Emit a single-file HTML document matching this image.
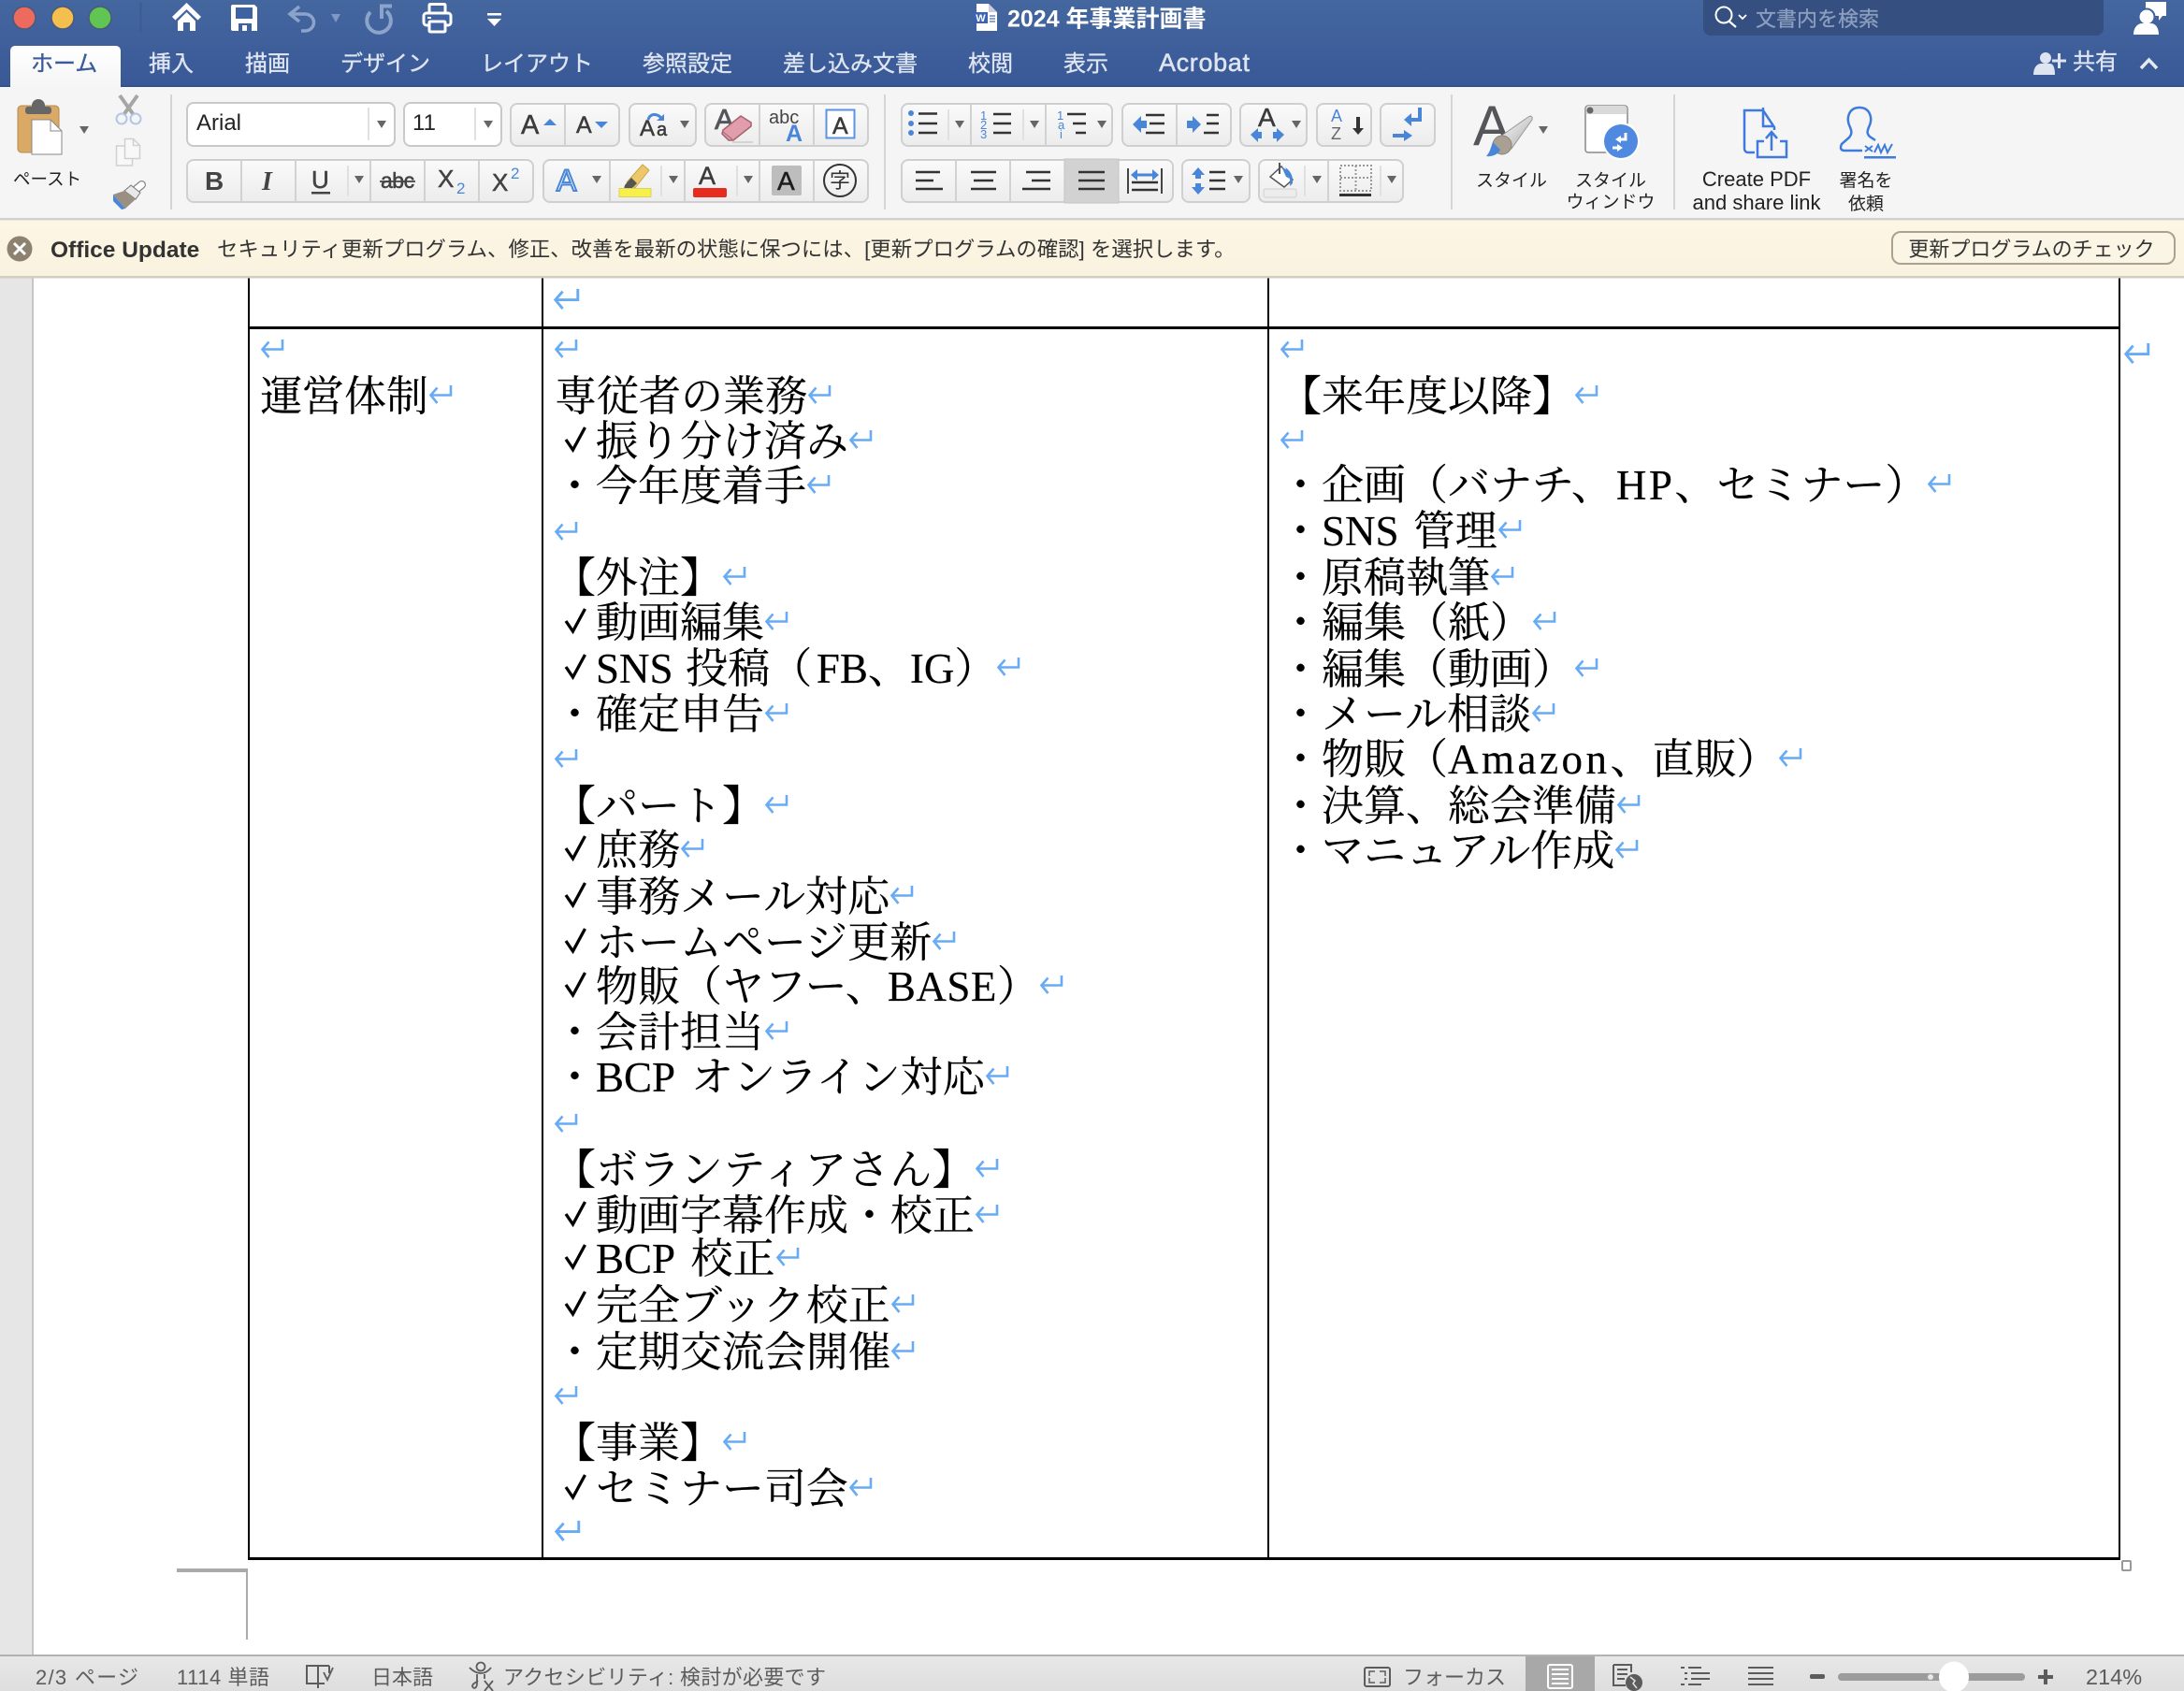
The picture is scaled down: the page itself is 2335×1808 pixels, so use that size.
<!DOCTYPE html>
<html lang="ja"><head><meta charset="utf-8"><title>2024年事業計画書</title>
<style>
html,body{margin:0;padding:0;background:#fff}
body{width:2335px;height:1808px;position:relative;overflow:hidden}
.abs{position:absolute}
.l{position:absolute;margin-top:5px;white-space:nowrap;font:45px/48px "Liberation Serif","Noto Serif CJK SC",serif;color:#000;word-spacing:7px;-webkit-text-stroke:.2px #000}
.c{position:absolute;left:-34px;top:7px;width:24px;height:29px}
.r{width:26px;height:22px;vertical-align:6px;overflow:visible}
.big{width:29px;height:26px}
.v{position:absolute;background:#000;width:2px}
.h{position:absolute;background:#000;height:2px}
svg text{font-family:"Liberation Sans","Noto Sans CJK JP",sans-serif}
.tab{fill:#dfe5f0;font-size:24px;stroke:#dfe5f0;stroke-width:.35}
.s{fill:#222;font-size:19px}
.gp{fill:url(#bg);stroke:#cfcfcf;stroke-width:2}
.d{stroke:#d2d2d2;stroke-width:2}
.dl{stroke:#e0e0e0;stroke-width:2}
.k{stroke:#333;stroke-width:2.5;fill:none}
.b{fill:#4a86d8}
.st{fill:#5c5c5c;font-size:22px}
.hv{stroke:#3b3b3b;stroke-width:.5}
</style></head><body>
<svg width="0" height="0" style="position:absolute"><defs>
<g id="ret"><path d="M24 1V11.5H2.5M9.5 3.5 2.500 11.500 9.500 20" fill="none" stroke="#68abf5" stroke-width="2.6"/></g>
<g id="chk"><path d="M2 15 9.500 26 22.500 2" fill="none" stroke="#000" stroke-width="3.300"/></g>
</defs></svg>

<!-- document -->
<div class="abs" style="left:0;top:297px;width:34px;height:1472px;background:#e6e6e6;border-right:2px solid #c6c6c6"></div>
<div class="v" style="left:265px;top:297px;height:1370px"></div>
<div class="v" style="left:579px;top:297px;height:1370px"></div>
<div class="v" style="left:1355px;top:297px;height:1370px"></div>
<div class="v" style="left:2265px;top:297px;height:1370px"></div>
<div class="h" style="left:265px;top:349px;width:2002px;height:2.5px"></div>
<div class="h" style="left:265px;top:1665px;width:2002px;height:2.5px"></div>
<div class="abs" style="left:189px;top:1677px;width:76px;height:3.5px;background:#aaa"></div>
<div class="abs" style="left:262.5px;top:1677px;width:2.5px;height:76px;background:#aaa"></div>
<div class="abs" style="left:2268px;top:1668px;width:7px;height:8px;border:2px solid #999;background:#fff;border-radius:2px"></div>

<svg class="abs" style="left:591px;top:307px" width="29" height="26" viewBox="0 0 26 22"><use href="#ret"/></svg>
<svg class="abs" style="left:2270px;top:365px" width="29" height="26" viewBox="0 0 26 22"><use href="#ret"/></svg>

<div class="l" style="left:278px;top:346px"><svg class="r" viewBox="0 0 26 22"><use href="#ret"/></svg></div>
<div class="l" style="left:278px;top:395px">運営体制<svg class="r" viewBox="0 0 26 22"><use href="#ret"/></svg></div>

<div class="l" style="left:592px;top:346px"><svg class="r" viewBox="0 0 26 22"><use href="#ret"/></svg></div>
<div class="l" style="left:593px;top:395px">専従者の業務<svg class="r" viewBox="0 0 26 22"><use href="#ret"/></svg></div>
<div class="l" style="left:637px;top:443px"><svg class="c" viewBox="0 0 24 29"><use href="#chk"/></svg>振り分け済み<svg class="r" viewBox="0 0 26 22"><use href="#ret"/></svg></div>
<div class="l" style="left:592px;top:491px">・今年度着手<svg class="r" viewBox="0 0 26 22"><use href="#ret"/></svg></div>
<div class="l" style="left:592px;top:541px"><svg class="r" viewBox="0 0 26 22"><use href="#ret"/></svg></div>
<div class="l" style="left:592px;top:589px">【外注】<svg class="r" viewBox="0 0 26 22"><use href="#ret"/></svg></div>
<div class="l" style="left:637px;top:637px"><svg class="c" viewBox="0 0 24 29"><use href="#chk"/></svg>動画編集<svg class="r" viewBox="0 0 26 22"><use href="#ret"/></svg></div>
<div class="l" style="left:637px;top:686px;word-spacing:2.5px"><svg class="c" viewBox="0 0 24 29"><use href="#chk"/></svg>SNS 投稿（<span style="margin-left:4.5px">FB</span>、IG）<svg class="r" viewBox="0 0 26 22"><use href="#ret"/></svg></div>
<div class="l" style="left:592px;top:735px">・確定申告<svg class="r" viewBox="0 0 26 22"><use href="#ret"/></svg></div>
<div class="l" style="left:592px;top:784px"><svg class="r" viewBox="0 0 26 22"><use href="#ret"/></svg></div>
<div class="l" style="left:592px;top:833px">【パート】<svg class="r" viewBox="0 0 26 22"><use href="#ret"/></svg></div>
<div class="l" style="left:637px;top:880px"><svg class="c" viewBox="0 0 24 29"><use href="#chk"/></svg>庶務<svg class="r" viewBox="0 0 26 22"><use href="#ret"/></svg></div>
<div class="l" style="left:637px;top:930px"><svg class="c" viewBox="0 0 24 29"><use href="#chk"/></svg>事務メール対応<svg class="r" viewBox="0 0 26 22"><use href="#ret"/></svg></div>
<div class="l" style="left:637px;top:979px"><svg class="c" viewBox="0 0 24 29"><use href="#chk"/></svg>ホームページ更新<svg class="r" viewBox="0 0 26 22"><use href="#ret"/></svg></div>
<div class="l" style="left:637px;top:1026px"><svg class="c" viewBox="0 0 24 29"><use href="#chk"/></svg>物販（ヤフー、<span style="letter-spacing:.5px">BASE</span>）<svg class="r" viewBox="0 0 26 22"><use href="#ret"/></svg></div>
<div class="l" style="left:592px;top:1075px">・会計担当<svg class="r" viewBox="0 0 26 22"><use href="#ret"/></svg></div>
<div class="l" style="left:592px;top:1123px;word-spacing:7.5px">・BCP オンライン対応<svg class="r" viewBox="0 0 26 22"><use href="#ret"/></svg></div>
<div class="l" style="left:592px;top:1174px"><svg class="r" viewBox="0 0 26 22"><use href="#ret"/></svg></div>
<div class="l" style="left:592px;top:1222px">【<span style="letter-spacing:.4px">ボランティアさん</span>】<svg class="r" viewBox="0 0 26 22"><use href="#ret"/></svg></div>
<div class="l" style="left:637px;top:1271px"><svg class="c" viewBox="0 0 24 29"><use href="#chk"/></svg>動画字幕作成・校正<svg class="r" viewBox="0 0 26 22"><use href="#ret"/></svg></div>
<div class="l" style="left:637px;top:1317px;word-spacing:7px"><svg class="c" viewBox="0 0 24 29"><use href="#chk"/></svg>BCP 校正<svg class="r" viewBox="0 0 26 22"><use href="#ret"/></svg></div>
<div class="l" style="left:637px;top:1367px"><svg class="c" viewBox="0 0 24 29"><use href="#chk"/></svg>完全<span style="letter-spacing:1px">ブック</span>校正<svg class="r" viewBox="0 0 26 22"><use href="#ret"/></svg></div>
<div class="l" style="left:592px;top:1417px">・定期交流会開催<svg class="r" viewBox="0 0 26 22"><use href="#ret"/></svg></div>
<div class="l" style="left:592px;top:1465px"><svg class="r" viewBox="0 0 26 22"><use href="#ret"/></svg></div>
<div class="l" style="left:592px;top:1514px">【事業】<svg class="r" viewBox="0 0 26 22"><use href="#ret"/></svg></div>
<div class="l" style="left:637px;top:1563px"><svg class="c" viewBox="0 0 24 29"><use href="#chk"/></svg>セミナー司会<svg class="r" viewBox="0 0 26 22"><use href="#ret"/></svg></div>
<div class="l" style="left:592px;top:1612px"><svg class="r big" viewBox="0 0 26 22"><use href="#ret"/></svg></div>

<div class="l" style="left:1368px;top:346px"><svg class="r" viewBox="0 0 26 22"><use href="#ret"/></svg></div>
<div class="l" style="left:1368px;top:395px">【来年度以降】<svg class="r" viewBox="0 0 26 22"><use href="#ret"/></svg></div>
<div class="l" style="left:1368px;top:443px"><svg class="r" viewBox="0 0 26 22"><use href="#ret"/></svg></div>
<div class="l" style="left:1368px;top:490px">・企画（バナチ、<span style="margin-left:3px;letter-spacing:2.5px">HP</span>、セミナー）<svg class="r" viewBox="0 0 26 22"><use href="#ret"/></svg></div>
<div class="l" style="left:1368px;top:539px;word-spacing:4px">・SNS 管理<svg class="r" viewBox="0 0 26 22"><use href="#ret"/></svg></div>
<div class="l" style="left:1368px;top:589px">・原稿執筆<svg class="r" viewBox="0 0 26 22"><use href="#ret"/></svg></div>
<div class="l" style="left:1368px;top:637px">・編集（紙）<svg class="r" viewBox="0 0 26 22"><use href="#ret"/></svg></div>
<div class="l" style="left:1368px;top:687px">・編集（動画）<svg class="r" viewBox="0 0 26 22"><use href="#ret"/></svg></div>
<div class="l" style="left:1368px;top:735px">・メール相談<svg class="r" viewBox="0 0 26 22"><use href="#ret"/></svg></div>
<div class="l" style="left:1368px;top:783px">・物販（<span style="letter-spacing:3.5px">Amazon</span>、直販）<svg class="r" viewBox="0 0 26 22"><use href="#ret"/></svg></div>
<div class="l" style="left:1368px;top:833px">・決算、総会準備<svg class="r" viewBox="0 0 26 22"><use href="#ret"/></svg></div>
<div class="l" style="left:1368px;top:881px">・マニュアル作成<svg class="r" viewBox="0 0 26 22"><use href="#ret"/></svg></div>

<!-- chrome -->
<svg class="abs" style="left:0;top:0" width="2335" height="298" viewBox="0 0 2335 298">
<defs>
<linearGradient id="tb" x1="0" y1="0" x2="0" y2="1"><stop offset="0" stop-color="#45679f"/><stop offset="1" stop-color="#385897"/></linearGradient>
<linearGradient id="bg" x1="0" y1="0" x2="0" y2="1"><stop offset="0" stop-color="#fafafa"/><stop offset="1" stop-color="#ececec"/></linearGradient>
<linearGradient id="tabg" x1="0" y1="0" x2="0" y2="1"><stop offset="0" stop-color="#fff"/><stop offset="1" stop-color="#f5f5f5"/></linearGradient>
<linearGradient id="up" x1="0" y1="0" x2="0" y2="1"><stop offset="0" stop-color="#fdf6e4"/><stop offset="1" stop-color="#f9f2df"/></linearGradient>
<linearGradient id="brush" x1="0" y1="0" x2="1" y2="1"><stop offset="0" stop-color="#fff"/><stop offset="1" stop-color="#a8a8a8"/></linearGradient>
<path id="t" d="M0 0h10l-5 8z" fill="#666"/>
</defs>
<rect width="2335" height="93" fill="url(#tb)"/>
<rect y="91.5" width="2335" height="1.5" fill="#2f4c85"/>
<rect y="93" width="2335" height="140" fill="#f5f5f5"/>
<rect y="233" width="2335" height="2.5" fill="#d3d1cb"/>
<rect y="235.5" width="2335" height="60" fill="url(#up)"/>
<rect y="295" width="2335" height="2.5" fill="#d2cdbd"/>

<!-- traffic lights -->
<ellipse cx="26" cy="19" rx="12" ry="12" fill="#ec6a5e" stroke="#4b5a78" stroke-width="1.5"/>
<ellipse cx="67" cy="19" rx="12" ry="12" fill="#f4bf4f" stroke="#4b5a78" stroke-width="1.5"/>
<ellipse cx="107" cy="19" rx="12" ry="12" fill="#61c554" stroke="#4b5a78" stroke-width="1.5"/>
<line x1="150.500" y1="3" x2="150.500" y2="35" stroke="#3b5b92" stroke-width="2"/>

<!-- QAT -->
<path d="M199.500 3 184 18l3.500 3.500L199.500 10l12 11.500L215 18zM190 22.500 199.500 13l9.500 9.500V33h-6V24h-7v9h-6z" fill="#fff"/>
<path d="M249 5h23l3 3v25h-26a2 2 0 0 1-2-2V7a2 2 0 0 1 2-2z" fill="#fff"/>
<rect x="252" y="8" width="18" height="12" fill="#3f62a0"/><rect x="255" y="25" width="14" height="8" fill="#3f62a0"/><rect x="259" y="27" width="5" height="6" fill="#fff"/>
<path d="M320 7 310 15l10 8M311 15h15a9.500 9 0 0 1 0 18h-4" fill="none" stroke="#8ca4ca" stroke-width="3.500"/>
<path d="M354 15h10l-5 9z" fill="#7f98c2"/>
<path d="M396 13A12.800 12.800 0 1 0 413 12M419 6.500H408V20" fill="none" stroke="#8ca4ca" stroke-width="4"/>
<rect x="459" y="4.500" width="17" height="10" rx="1" fill="none" stroke="#fff" stroke-width="3"/>
<rect x="453" y="14" width="29" height="13" rx="3" fill="#3f62a0" stroke="#fff" stroke-width="3"/>
<rect x="459" y="23" width="17" height="11" rx="1" fill="#3f62a0" stroke="#fff" stroke-width="3"/>
<rect x="457" y="18" width="4" height="2" fill="#fff"/>
<path d="M521 14h15v2.500h-15zM521 20h15l-7.500 8z" fill="#fff"/>

<!-- title -->
<path d="M1044 4h13l9 9v20h-22z" fill="#fff"/><path d="M1057 4v9h9z" fill="#ccd"/>
<rect x="1041" y="13" width="15" height="12" fill="#3c62b4"/>
<text x="1048.500" y="23" font-size="11" fill="#fff" text-anchor="middle" font-weight="bold">W</text>
<path d="M1058 17h6M1058 20h6M1058 23h6" stroke="#4a6fb5" stroke-width="1.300"/>
<text x="1077" y="28.500" font-size="25" font-weight="bold" fill="#fff">2024 年事業計画書</text>

<!-- search / account -->
<path d="M1821 0h428v30a8 8 0 0 1-8 8h-412a8 8 0 0 1-8-8z" fill="#344f80"/>
<circle cx="1843" cy="16" r="8.500" fill="none" stroke="#fff" stroke-width="2"/><path d="M1849 23l7 6" stroke="#fff" stroke-width="2.200"/>
<path d="M1859 16l4 4 4-4" fill="none" stroke="#fff" stroke-width="1.800"/>
<text x="1877" y="28" font-size="22" fill="#8c9ebe" stroke="#8c9ebe" stroke-width=".3">文書内を検索</text>
<path d="M2294 2h22v15h-4l-4 5v-5h-14z" fill="#fff"/>
<circle cx="2295" cy="18" r="8.500" fill="#fff" stroke="#3f62a0" stroke-width="2"/>
<path d="M2281 37c0-8 5-12 9-12h10c4 0 8 4 8 12z" fill="#fff"/>

<!-- tabs -->
<path d="M11 93V54a5 5 0 0 1 5-5h108a5 5 0 0 1 5 5v39z" fill="url(#tabg)"/>
<text x="33" y="76" font-size="24" fill="#3a5c9c" stroke="#3a5c9c" stroke-width=".35">ホーム</text>
<text class="tab" x="159" y="76">挿入</text>
<text class="tab" x="262" y="76">描画</text>
<text class="tab" x="364" y="76">デザイン</text>
<text class="tab" x="514" y="76">レイアウト</text>
<text class="tab" x="687" y="76">参照設定</text>
<text class="tab" x="837" y="76">差し込み文書</text>
<text class="tab" x="1035" y="76">校閲</text>
<text class="tab" x="1137" y="76">表示</text>
<text class="tab" x="1239" y="76" style="font-size:27px;stroke-width:.5" textLength="97">Acrobat</text>
<circle cx="2187" cy="62" r="6" fill="#dfe5f0"/><path d="M2174 80c0-8 4-12 8-12h10c3 0 5 4 5 12z" fill="#dfe5f0"/>
<path d="M2201.500 57v16M2194 65h15" stroke="#dfe5f0" stroke-width="3"/>
<text class="tab" x="2216" y="74">共有</text>
<path d="M2289 73l8.500-9 8.500 9" fill="none" stroke="#e5e9f1" stroke-width="3.500"/>

<!-- ribbon separators -->
<path d="M183 101v123M946 101v123M1552 101v123M1790 101v123" stroke="#d5d5d5" stroke-width="2"/>

<!-- clipboard -->
<rect x="19" y="113" width="44" height="50" rx="4" fill="#d9a965" stroke="#b28a52" stroke-width="1"/>
<circle cx="41" cy="113" r="7" fill="#666"/><rect x="27" y="114" width="28" height="8" rx="3" fill="#666"/>
<path d="M34 128h20l12 12v25H34z" fill="#fff" stroke="#888" stroke-width="1"/><path d="M54 128v12h12" fill="none" stroke="#888"/>
<use href="#t" x="85" y="135"/>
<text x="14" y="198" class="s" style="font-size:18.500px">ペースト</text>
<path d="M128 102l15 21M147 102l-15 21" stroke="#a6a6a6" stroke-width="4"/>
<circle cx="130" cy="127" r="5.500" fill="#f5f5f5" stroke="#b4c6e8" stroke-width="2"/><circle cx="145" cy="127" r="5.500" fill="#f5f5f5" stroke="#b4c6e8" stroke-width="2"/>
<rect x="124.500" y="156" width="17" height="21" fill="#f8f8f8" stroke="#d0d0d0" stroke-width="1.500"/>
<path d="M133.500 148.500h9l7 7v14h-16z" fill="#f8f8f8" stroke="#d0d0d0" stroke-width="1.500"/><path d="M142.500 148.500v7h7" fill="none" stroke="#d0d0d0" stroke-width="1.500"/>
<path d="M146 202l5.500-4.500" stroke="#888" stroke-width="9" stroke-linecap="round"/><path d="M146 202l5.500-4.500" stroke="#fff" stroke-width="6.500" stroke-linecap="round"/>
<path d="M133 204l7-6 10 8-5 7z" fill="#e8e8e8" stroke="#777"/>
<path d="M121 208l12-4 12 9-11 10z" fill="#9a8f80"/><path d="M121 208l13 15-4 1-9-9z" fill="#4a86d8"/>

<!-- font dropdowns -->
<rect x="200" y="110" width="222" height="46" rx="7" fill="#fff" stroke="#c9c9c9" stroke-width="2"/>
<line class="dl" x1="394" y1="115" x2="394" y2="150"/>
<text x="210" y="139" font-size="24" fill="#222">Arial</text><use href="#t" x="403" y="129"/>
<rect x="432" y="110" width="104" height="46" rx="7" fill="#fff" stroke="#c9c9c9" stroke-width="2"/>
<line class="dl" x1="508" y1="115" x2="508" y2="150"/>
<text x="441" y="139" font-size="24" fill="#222">11</text><use href="#t" x="517" y="129"/>

<!-- row 1 groups -->
<rect class="gp" x="546" y="111" width="116" height="45" rx="7"/><rect class="gp" x="673" y="111" width="71" height="45" rx="7"/>
<rect class="gp" x="754" y="111" width="174" height="45" rx="7"/><rect class="gp" x="964" y="111" width="225" height="45" rx="7"/>
<rect class="gp" x="1200" y="111" width="116" height="45" rx="7"/><rect class="gp" x="1326" y="111" width="71" height="45" rx="7"/>
<rect class="gp" x="1408" y="111" width="58" height="45" rx="7"/><rect class="gp" x="1476" y="111" width="58" height="45" rx="7"/>
<path class="d" d="M604 112v43M812 112v43M870 112v43M1038 112v43M1118 112v43M1258 112v43"/>
<path d="M1014 117v33M1094 117v33" class="dl"/>

<text class="hv" x="557" y="143" font-size="29" fill="#3b3b3b">A</text><path d="M581 134l7-7 7 7z" class="b"/>
<text class="hv" x="616" y="142" font-size="25" fill="#3b3b3b">A</text><path d="M636 130h14l-7 7z" class="b"/>
<text class="hv" x="684" y="145" font-size="24" fill="#3b3b3b">A</text><text class="hv" x="702" y="145" font-size="20" fill="#3b3b3b">a</text>
<path d="M693 128c2-7 9-7 14-2" fill="none" stroke="#4a86d8" stroke-width="3"/><path d="M702 129h8v-7z" class="b"/><use href="#t" x="727" y="129"/>
<text x="764" y="138" font-size="31" fill="#55555c" stroke="#55555c" stroke-width=".8">A</text>
<path d="M773 139l19-15 11 7v4l-19 15h-5l-7-7z" fill="#e29dac" stroke="#a3626f" stroke-width="1.500"/><path d="M773 141l10 8" stroke="#a3626f"/><path d="M783 152h22" stroke="#ccc" stroke-width="1.500"/>
<text x="822" y="132" font-size="20" fill="#444">abc</text>
<text x="840" y="151" font-size="25" font-weight="bold" fill="#4a86d8">A</text>
<rect x="883.500" y="117.500" width="30" height="30" fill="#fff" stroke="#5a94e0" stroke-width="2"/>
<text class="hv" x="890" y="143" font-size="25" fill="#3b3b3b">A</text>

<circle cx="974" cy="121" r="3" class="b"/><circle cx="974" cy="132" r="3" class="b"/><circle cx="974" cy="142" r="3" class="b"/>
<path class="k" d="M982 121.500h20M982 132h20M982 142h20"/><use href="#t" x="1021" y="129"/>
<g fill="#4a86d8" font-size="13"><text x="1048" y="128">1</text><text x="1048" y="138">2</text><text x="1048" y="148">3</text><text x="1130" y="128">1</text><text x="1131" y="138">a</text><text x="1133" y="148">i</text></g>
<path class="k" d="M1062 122h19M1062 132h19M1062 142h19M1141 122h20M1147 132h14M1150 142h11"/><use href="#t" x="1101" y="129"/><use href="#t" x="1173" y="129"/>
<path d="M1211 133l9-9v5h6v8h-6v5z" class="b"/><path class="k" d="M1225 123h20M1229 132h16M1225 142h20"/>
<path d="M1284 133l-9-9v5h-6v8h6v5z" class="b"/><path class="k" d="M1290 123h13M1290 132h13M1287 142h16"/>
<text class="hv" x="1345" y="135" font-size="28" fill="#3b3b3b">A</text>
<path d="M1337 144l8-7v4h4v7h-4v4zM1373 144l-8-7v4h-4v7h4v4z" class="b"/><use href="#t" x="1381" y="129"/>
<text x="1423" y="130" font-size="18" fill="#4a86d8">A</text><text x="1423" y="149" font-size="18" fill="#666">Z</text>
<path d="M1452 125v14" stroke="#333" stroke-width="4"/><path d="M1446 137h12l-6 7z" fill="#333"/>
<path d="M1518 115v13h-11" fill="none" stroke="#4a86d8" stroke-width="4"/><path d="M1501 128l8-7v14z" class="b"/>
<path d="M1489 145h12" stroke="#4a86d8" stroke-width="4"/><path d="M1510 145l-9-6v12z" class="b"/>

<!-- row 2 groups -->
<rect class="gp" x="200" y="171" width="370" height="45" rx="7"/><rect class="gp" x="581" y="171" width="347" height="45" rx="7"/>
<rect class="gp" x="964" y="171" width="290" height="45" rx="7"/><rect class="gp" x="1264" y="171" width="72" height="45" rx="7"/>
<rect class="gp" x="1346" y="171" width="154" height="45" rx="7"/>
<rect x="1138" y="170" width="58" height="47" fill="#d2d2d2" stroke="#c4c4c4"/>
<path class="d" d="M258 172v43M316 172v43M396 172v43M454 172v43M512 172v43M652 172v43M732 172v43M812 172v43M870 172v43M1022 172v43M1080 172v43M1420 172v43"/>
<path class="dl" d="M372 177v33M707 177v33M788 177v33M1395 177v33M1476 177v33"/>

<text x="219" y="203" font-size="28" font-weight="bold" fill="#444">B</text>
<text x="280" y="203" font-size="28" font-weight="bold" font-style="italic" style="font-family:'Liberation Serif',serif" fill="#444">I</text>
<text class="hv" x="333" y="201" font-size="26" fill="#444">U</text><rect x="333" y="205" width="20" height="2.500" fill="#444"/>
<use href="#t" x="379" y="188"/>
<text class="hv" x="407" y="201" font-size="23" fill="#444" style="letter-spacing:-.5px">abc</text><path d="M406 194h38" stroke="#444" stroke-width="1.800"/>
<text class="hv" x="468" y="200" font-size="26" fill="#444">X</text><text x="488" y="207" font-size="17" fill="#4a86d8">2</text>
<text class="hv" x="526" y="204" font-size="26" fill="#444">X</text><text x="546" y="191" font-size="17" fill="#4a86d8">2</text>
<text x="595" y="204" font-size="32" fill="#fff" stroke="#4a86d8" stroke-width="2">A</text><use href="#t" x="633" y="188"/>
<path d="M670 195l17-19 7 6-15 19z" fill="#edc86a" stroke="#c9a54b"/><path d="M668 198l7-8 6 6-6 6h-8z" fill="#555"/>
<rect x="662" y="201.500" width="34" height="9" fill="#f7f04a" stroke="#d9d35a"/><use href="#t" x="715" y="188"/>
<text class="hv" x="747" y="197" font-size="27" fill="#3b3b3b">A</text><rect x="741" y="201" width="36" height="10" rx="2" fill="#e62c1f"/><use href="#t" x="795" y="188"/>
<rect x="825" y="177" width="32" height="32" rx="2" fill="#bdbdbd"/><text x="831" y="203" font-size="28" fill="#1c1c1c" stroke="#1c1c1c" stroke-width=".5">A</text>
<circle cx="898" cy="193" r="17" fill="none" stroke="#333" stroke-width="2"/><text x="898" y="201" font-size="22" fill="#333" text-anchor="middle">字</text>

<path class="k" d="M979 184h26M979 193h19M979 202h29M1038 184h27M1041 193h21M1038 202h27M1097 184h26M1103 193h20M1093 202h30M1153 184h28M1153 193h28M1153 202h28"/>
<path d="M1206 180v27M1242 180v27" stroke="#444" stroke-width="2"/>
<path d="M1209 187l7-6v12zM1239 187l-7-6v12z" class="b"/><path d="M1215 187h18" stroke="#4a86d8" stroke-width="3"/>
<path class="k" d="M1210 195h28M1210 203h28"/>
<path d="M1281 179l7 8h-4v4h-6v-4h-4zM1281 208l7-8h-4v-4h-6v4h-4z" class="b"/>
<path class="k" d="M1293 184h17M1293 193h17M1293 202h17"/><use href="#t" x="1319" y="188"/>
<path d="M1358 189l12-11 12 14-9 8z" fill="#fff" stroke="#555" stroke-width="1.500"/><path d="M1368 174v12" stroke="#555" stroke-width="2"/><path d="M1374 179c5 3 9 9 8 17l-3 3c1-7-1-13-5-20zM1370 178l6 4 5 10-6-3z" class="b"/>
<rect x="1351" y="202" width="35" height="9" rx="2" fill="#ececec" stroke="#d0d0d0"/><use href="#t" x="1403" y="188"/>
<path d="M1433 177h33v27h-33zM1449.500 177v27M1433 190h33" fill="none" stroke="#999" stroke-width="2" stroke-dasharray="2 2"/>
<rect x="1432" y="207" width="34" height="3" fill="#333"/><use href="#t" x="1483" y="188"/>

<!-- styles -->
<text x="1575" y="155" font-size="60" fill="#55555a">A</text>
<path d="M1604 146l30-21c3-2 5 0 4 3l-22 31z" fill="url(#brush)" stroke="#999"/>
<circle cx="1606" cy="155" r="10" fill="#a99f92" stroke="#8a8277"/><path d="M1589 167c6 1 13-2 15-7l-8-8c-2 5-3 11-7 15z" fill="#4a86d8"/>
<use href="#t" x="1645" y="135"/>
<text class="s" x="1616" y="199" text-anchor="middle">スタイル</text>
<rect x="1695" y="113" width="45" height="50" rx="3" fill="#fff" stroke="#888" stroke-width="1.500"/>
<path d="M1695.500 122v-6a3 3 0 0 1 3-3h38a3 3 0 0 1 3 3v6z" fill="#d9d9d9"/><circle cx="1700" cy="118" r="3.500" fill="#666"/>
<circle cx="1733" cy="151" r="20" fill="#fff"/><circle cx="1733" cy="151" r="18" fill="#4f8ae0"/>
<path d="M1738 142v7h-6" fill="none" stroke="#fff" stroke-width="3"/><path d="M1727 149l6-4v8z" fill="#fff"/><path d="M1724 158h6" stroke="#fff" stroke-width="3"/><path d="M1735 158l-6-4v8z" fill="#fff"/>
<text class="s" x="1722" y="199" text-anchor="middle">スタイル</text>
<text class="s" x="1722" y="222" text-anchor="middle">ウィンドウ</text>

<!-- acrobat -->
<path d="M1876 163h-7a4 4 0 0 1-4-4v-41h20l12 18v3M1885 115v20h12" fill="none" stroke="#3f7bdc" stroke-width="2.500"/>
<path d="M1886 151h-7v17h31v-17h-7M1894 161v-19M1888 148l6-7 6 7" fill="none" stroke="#3f7bdc" stroke-width="2.500"/>
<text x="1878" y="199" font-size="22" fill="#222" text-anchor="middle">Create PDF</text>
<text x="1878" y="224" font-size="22" fill="#222" text-anchor="middle">and share link</text>
<path d="M1991 161h-19c-4 0-5-3-3-7l8-7c3-4 3-6 1-11-5-10-1-21 10-21s15 11 10 21c-2 5-2 7 1 10l6 4" fill="none" stroke="#3f7bdc" stroke-width="2.500"/>
<path d="M1994 156l8 6M2002 156l-8 6M2004 163l4-8 3 8 4-8 3 8 5-9" fill="none" stroke="#3f7bdc" stroke-width="2"/>
<rect x="1993" y="167" width="34" height="2.500" fill="#3f7bdc"/>
<text class="s" x="1995" y="199" text-anchor="middle">署名を</text>
<text class="s" x="1995" y="224" text-anchor="middle">依頼</text>

<!-- update bar -->
<circle cx="21" cy="266" r="13.500" fill="#8d8270"/>
<path d="M15 260l12 12M27 260l-12 12" stroke="#fff" stroke-width="3"/>
<text x="54" y="275" font-size="24.500" font-weight="bold" fill="#333">Office Update</text>
<text x="232" y="274" font-size="22.400" fill="#333">セキュリティ更新プログラム、修正、改善を最新の状態に保つには、[更新プログラムの確認] を選択します。</text>
<rect x="2023" y="248" width="302" height="34" rx="9" fill="#fbf5e5" stroke="#a9a292" stroke-width="2"/>
<text x="2172" y="274" font-size="22" fill="#333" text-anchor="middle">更新プログラムのチェック</text>
</svg>

<!-- status bar -->
<svg class="abs" style="left:0;top:1769px" width="2335" height="39" viewBox="0 1769 2335 39">
<defs><linearGradient id="sb" x1="0" y1="0" x2="0" y2="1"><stop offset="0" stop-color="#e8e8e8"/><stop offset="1" stop-color="#dedede"/></linearGradient></defs>
<rect y="1769" width="2335" height="39" fill="url(#sb)"/><rect y="1769" width="2335" height="2" fill="#b2b2b2"/>
<text class="st" x="38" y="1801" textLength="110">2/3 ページ</text>
<text class="st" x="189" y="1801" textLength="99">1114 単語</text>
<path d="M328 1781h12v19h-12zM352 1781h-12M352 1781v8M340 1781v24M340 1800h7" fill="none" stroke="#5c5c5c" stroke-width="2"/><path d="M346 1788l4 8 6-13" fill="none" stroke="#5c5c5c" stroke-width="1.800"/>
<text class="st" x="397" y="1801">日本語</text>
<circle cx="514" cy="1782" r="4.500" fill="none" stroke="#5c5c5c" stroke-width="1.800"/>
<path d="M502 1783c4 4 8 6 12 6s8-2 11-6M510 1790v10c0 4-3 7-5 3 0-3 4-4 6-6M518 1790v5M518 1797l9 11M527 1797l-9 11" fill="none" stroke="#5c5c5c" stroke-width="1.800"/>
<text class="st" x="538" y="1801" textLength="345">アクセシビリティ: 検討が必要です</text>

<rect x="1459" y="1783" width="27" height="20" rx="2" fill="none" stroke="#5c5c5c" stroke-width="2"/>
<path d="M1464 1792v-5h6M1481 1792v-5h-6M1464 1794v5h6M1481 1794v5h-6" fill="none" stroke="#5c5c5c" stroke-width="1.500"/>
<text class="st" x="1500" y="1801">フォーカス</text>
<rect x="1631" y="1771" width="74" height="37" fill="#a8a8a8"/>
<rect x="1655" y="1780" width="26" height="25" rx="2" fill="#aaa" stroke="#fff" stroke-width="2"/>
<path d="M1659 1785h18M1659 1790h18M1659 1795h18M1659 1800h18" stroke="#fff" stroke-width="2"/>
<path d="M1725 1780h19v8M1725 1780v22h13" fill="none" stroke="#5c5c5c" stroke-width="2"/><path d="M1729 1785h11M1729 1790h11M1729 1795h8" stroke="#5c5c5c" stroke-width="2"/>
<circle cx="1747" cy="1799" r="9" fill="#5c5c5c"/><path d="M1743 1793l5 4-2 3 4 5" fill="none" stroke="#e3e3e3" stroke-width="1.500"/>
<path d="M1805 1783h14M1808 1789h20M1808 1795h20M1805 1801h14" stroke="#5c5c5c" stroke-width="2"/><path d="M1797 1783h4M1801 1789h3M1801 1795h3M1797 1801h4" stroke="#5c5c5c" stroke-width="2"/>
<path d="M1869 1783h27M1869 1789h27M1869 1795h27M1869 1801h27" stroke="#5c5c5c" stroke-width="2"/>
<rect x="1935" y="1790" width="16" height="5" rx="2" fill="#5c5c5c"/>
<rect x="1965" y="1789" width="200" height="8" rx="4" fill="#9c9c9c"/>
<circle cx="2064" cy="1793" r="3" fill="#e6e6e6"/>
<ellipse cx="2089" cy="1793" rx="16" ry="16.500" fill="#fff"/>
<path d="M2187 1785v16M2179 1793h16" stroke="#5c5c5c" stroke-width="4"/>
<text class="st" x="2230" y="1801" style="font-size:23.500px">214%</text>
</svg>
</body></html>
